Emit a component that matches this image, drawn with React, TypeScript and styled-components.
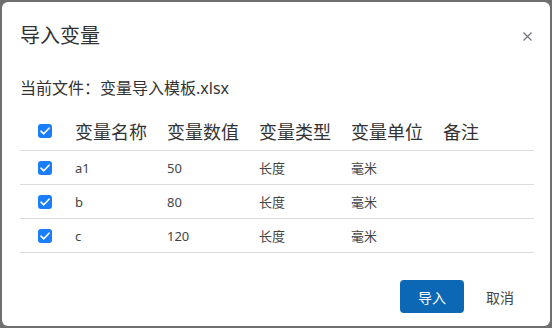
import React from "react";
import styled, { createGlobalStyle } from "styled-components";

const GlobalStyle = createGlobalStyle`
  html, body {
    margin: 0;
    padding: 0;
    background: #6f6f6f;
  }
  body {
    font-family: "Noto Sans", "Noto Sans CJK SC", sans-serif;
  }
`;

interface Variable {
  name: string;
  value: string;
  type: string;
  unit: string;
  note: string;
}

const rows: Variable[] = [
  { name: "a1", value: "50", type: "长度", unit: "毫米", note: "" },
  { name: "b", value: "80", type: "长度", unit: "毫米", note: "" },
  { name: "c", value: "120", type: "长度", unit: "毫米", note: "" },
];

const Backdrop = styled.div`
  width: 552px;
  height: 328px;
  padding: 2px;
  box-sizing: border-box;
  background: #6f6f6f;
`;

const Dialog = styled.div`
  width: 548px;
  height: 324px;
  background: #fff;
  border-radius: 6px;
  box-sizing: border-box;
  padding: 20px 16px 0 18px;
  display: flex;
  flex-direction: column;
`;

const Header = styled.div`
  display: flex;
  align-items: center;
  justify-content: space-between;
  height: 28px;
  padding-right: 2px;
`;

const Title = styled.h2`
  margin: 0;
  font-size: 20px;
  font-weight: 400;
  line-height: 28px;
  color: #303133;
`;

const CloseButton = styled.button`
  border: none;
  background: none;
  padding: 0;
  width: 9px;
  height: 9px;
  display: flex;
  cursor: pointer;
  color: #70757c;
`;

const FileLine = styled.div`
  margin-top: 26px;
  font-size: 16px;
  line-height: 24px;
  color: #333;
`;

const Table = styled.div`
  margin-top: 11px;
  width: 514px;
`;

const Row = styled.div<{ $head?: boolean }>`
  display: grid;
  grid-template-columns: 55px 92px 92px 92px 92px 91px;
  align-items: center;
  height: ${(p) => (p.$head ? 39 : 33)}px;
  border-bottom: 1px solid #dcdcdc;
  font-size: ${(p) => (p.$head ? 18 : 13)}px;
  color: ${(p) => (p.$head ? "#333" : "#444")};
`;

const CheckCell = styled.div`
  padding-left: 18px;
  display: flex;
  align-items: center;
`;

const Cell = styled.div`
  white-space: nowrap;
`;

const Box = styled.span`
  width: 14px;
  height: 14px;
  border-radius: 3px;
  background: #1a7efb;
  display: flex;
  align-items: center;
  justify-content: center;
`;

const Footer = styled.div`
  margin-top: 27px;
  display: flex;
  justify-content: flex-end;
  gap: 4px;
  padding-right: 2px;
`;

const Button = styled.button<{ $primary?: boolean }>`
  width: 64px;
  height: 33px;
  border: none;
  border-radius: 4px;
  font-family: inherit;
  font-size: 14px;
  cursor: pointer;
  background: ${(p) => (p.$primary ? "#0c67b5" : "transparent")};
  color: ${(p) => (p.$primary ? "#fff" : "#444")};
`;

const Check: React.FC = () => (
  <Box>
    <svg width="10" height="8" viewBox="0 0 10 8">
      <path
        d="M1 4.2 L3.8 6.8 L9 1.2"
        fill="none"
        stroke="#fff"
        strokeWidth="1.6"
        strokeLinecap="round"
        strokeLinejoin="round"
      />
    </svg>
  </Box>
);

export default function App() {
  return (
    <Backdrop>
      <GlobalStyle />
      <Dialog>
        <Header>
          <Title>导入变量</Title>
          <CloseButton aria-label="关闭">
            <svg width="9" height="9" viewBox="0 0 9 9">
              <path
                d="M0.5 0.5 L8.5 8.5 M8.5 0.5 L0.5 8.5"
                stroke="currentColor"
                strokeWidth="1.2"
              />
            </svg>
          </CloseButton>
        </Header>
        <FileLine>当前文件：变量导入模板.xlsx</FileLine>
        <Table>
          <Row $head>
            <CheckCell>
              <Check />
            </CheckCell>
            <Cell>变量名称</Cell>
            <Cell>变量数值</Cell>
            <Cell>变量类型</Cell>
            <Cell>变量单位</Cell>
            <Cell>备注</Cell>
          </Row>
          {rows.map((r) => (
            <Row key={r.name}>
              <CheckCell>
                <Check />
              </CheckCell>
              <Cell>{r.name}</Cell>
              <Cell>{r.value}</Cell>
              <Cell>{r.type}</Cell>
              <Cell>{r.unit}</Cell>
              <Cell>{r.note}</Cell>
            </Row>
          ))}
        </Table>
        <Footer>
          <Button $primary>导入</Button>
          <Button>取消</Button>
        </Footer>
      </Dialog>
    </Backdrop>
  );
}
